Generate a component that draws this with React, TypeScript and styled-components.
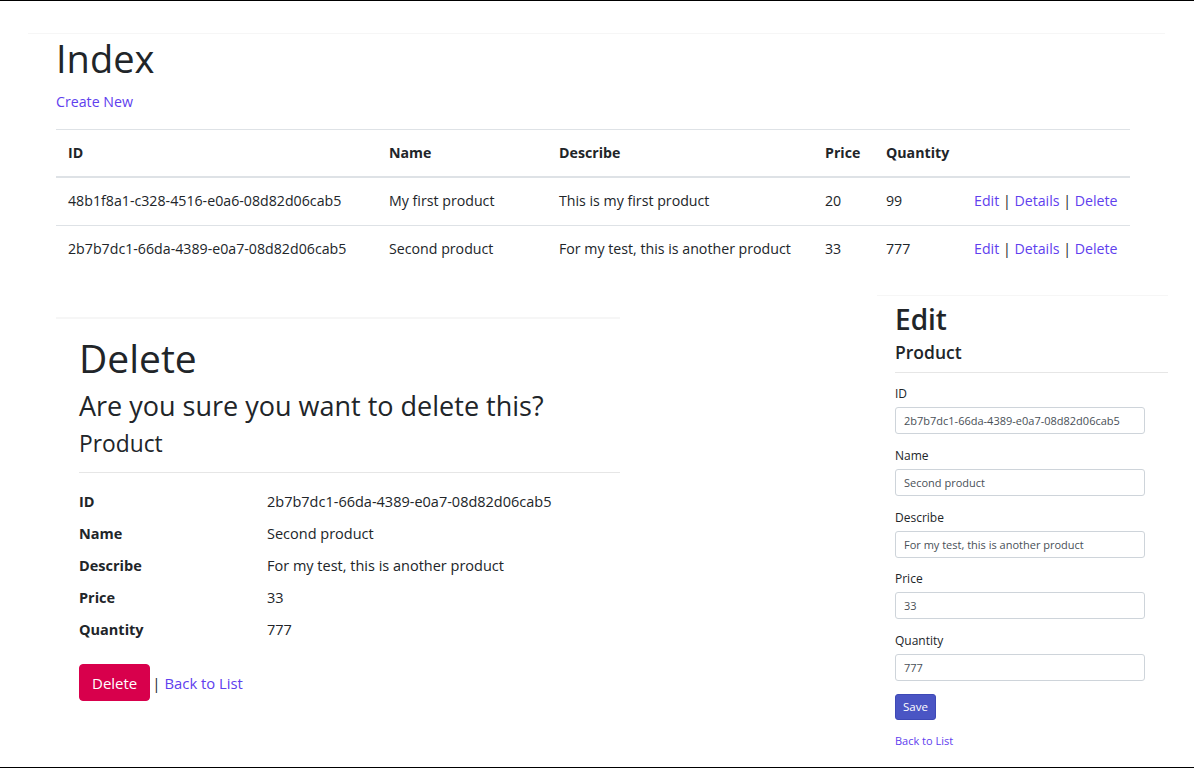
import React from "react";
import styled, { createGlobalStyle } from "styled-components";

const GlobalStyle = createGlobalStyle`
  html, body {
    margin: 0;
    padding: 0;
    background: #fff;
  }
  body {
    font-family: "Open Sans", "Noto Sans", sans-serif;
    color: #212529;
  }
`;

const colors = {
  text: "#212529",
  link: "#6040ee",
  border: "#dee2e6",
  danger: "#d8004c",
  primary: "#4a55c4",
};

type Product = {
  id: string;
  name: string;
  describe: string;
  price: number;
  quantity: number;
};

const products: Product[] = [
  {
    id: "48b1f8a1-c328-4516-e0a6-08d82d06cab5",
    name: "My first product",
    describe: "This is my first product",
    price: 20,
    quantity: 99,
  },
  {
    id: "2b7b7dc1-66da-4389-e0a7-08d82d06cab5",
    name: "Second product",
    describe: "For my test, this is another product",
    price: 33,
    quantity: 777,
  },
];

const columns = [
  { key: "id", label: "ID", width: 321 },
  { key: "name", label: "Name", width: 170 },
  { key: "describe", label: "Describe", width: 266 },
  { key: "price", label: "Price", width: 61 },
  { key: "quantity", label: "Quantity", width: 88 },
  { key: "actions", label: "", width: 168 },
];

const Frame = styled.div`
  width: 1194px;
  height: 768px;
  box-sizing: border-box;
  border-top: 1px solid #000;
  border-bottom: 1px solid #000;
  overflow: hidden;
`;

const IndexSection = styled.section`
  margin: 32px 0 0 28px;
  width: 1137px;
  box-sizing: border-box;
  padding-left: 28px;
  border-top: 1px solid #f6f6f6;
`;

const PageTitle = styled.h1<{ $size: number; $lh: number; $weight?: number }>`
  margin: 0;
  font-size: ${(p) => p.$size}px;
  line-height: ${(p) => p.$lh}px;
  font-weight: ${(p) => p.$weight ?? 500};
  color: ${colors.text};
`;

const Link = styled.a<{ $size?: number }>`
  color: ${colors.link};
  text-decoration: none;
  font-size: ${(p) => p.$size ?? 14.2}px;
  cursor: pointer;
`;

const CreateLink = styled.div`
  margin-top: 7px;
  line-height: 24px;
`;

const Table = styled.table`
  margin-top: 15px;
  width: 1074px;
  border-collapse: collapse;
  table-layout: fixed;
  font-size: 14.2px;
`;

const Th = styled.th`
  text-align: left;
  font-weight: 700;
  padding: 11px 12px;
  line-height: 24px;
  border-top: 1px solid ${colors.border};
  border-bottom: 2px solid ${colors.border};
`;

const Td = styled.td`
  padding: 11px 12px 12px;
  line-height: 24px;
  border-top: 1px solid ${colors.border};
  white-space: nowrap;
`;

const Sep = styled.span`
  color: ${colors.text};
`;

const BottomRow = styled.div`
  display: flex;
  align-items: flex-start;
  margin-top: 22px;
  padding-left: 56px;
  padding-right: 26px;
`;

const DeletePanel = styled.section`
  margin-top: 22px;
  width: 564px;
  box-sizing: border-box;
  padding: 15px 0 0 23px;
  border-top: 2px solid #f6f6f6;
`;

const Heading = styled.div<{ $size: number; $lh: number; $top: number; $weight?: number }>`
  margin-top: ${(p) => p.$top}px;
  font-size: ${(p) => p.$size}px;
  line-height: ${(p) => p.$lh}px;
  font-weight: ${(p) => p.$weight ?? 400};
`;

const Rule = styled.hr<{ $top: number; $bottom?: number }>`
  margin: ${(p) => p.$top}px 0 ${(p) => p.$bottom ?? 0}px;
  border: 0;
  border-top: 1px solid #e6e6e6;
`;

const DetailList = styled.dl`
  display: grid;
  grid-template-columns: 188px 1fr;
  row-gap: 8px;
  margin: 17px 0 22px;
  font-size: 14.5px;
  line-height: 24px;
`;

const Term = styled.dt`
  font-weight: 700;
`;

const Desc = styled.dd`
  margin: 0;
`;

const Actions = styled.div`
  display: flex;
  align-items: center;
  font-size: 15px;
  gap: 4px;

  & > button {
    margin-right: -2px;
  }
`;

const Button = styled.button<{ $variant: "danger" | "primary"; $small?: boolean }>`
  font-family: inherit;
  color: #fff;
  background: ${(p) => (p.$variant === "danger" ? colors.danger : colors.primary)};
  border: 1px solid ${(p) => (p.$variant === "danger" ? colors.danger : "#3e49b6")};
  border-radius: ${(p) => (p.$small ? 3 : 4)}px;
  height: ${(p) => (p.$small ? 26 : 37)}px;
  padding: 0 ${(p) => (p.$small ? 7 : 12)}px;
  font-size: ${(p) => (p.$small ? 11.5 : 15)}px;
  cursor: pointer;
`;

const EditPanel = styled.section`
  margin-left: auto;
  width: 291px;
  box-sizing: border-box;
  padding: 6px 0 0 18px;
  border-top: 1px solid #f6f6f6;
`;

const FormGroup = styled.div`
  display: flex;
  flex-direction: column;
  margin-bottom: 12.75px;
`;

const Label = styled.label`
  font-size: 12px;
  line-height: 18px;
  margin-bottom: 4px;
`;

const Input = styled.input`
  width: 250px;
  height: 27px;
  box-sizing: border-box;
  padding: 0 8px;
  border: 1px solid #ced4da;
  border-radius: 3px;
  font-family: inherit;
  font-size: 11px;
  color: #495057;
  outline: none;
`;

const BackLink = styled.div`
  margin-top: 11px;
  line-height: 16px;
`;

function renderCell(p: Product, key: string) {
  if (key === "actions") {
    return (
      <>
        <Link>Edit</Link> <Sep>|</Sep> <Link>Details</Link> <Sep>|</Sep> <Link>Delete</Link>
      </>
    );
  }
  return String(p[key as keyof Product]);
}

const selected = products[1];
const fields: { key: keyof Product; label: string }[] = [
  { key: "id", label: "ID" },
  { key: "name", label: "Name" },
  { key: "describe", label: "Describe" },
  { key: "price", label: "Price" },
  { key: "quantity", label: "Quantity" },
];

export default function App() {
  return (
    <>
      <GlobalStyle />
      <Frame>
        <IndexSection>
          <PageTitle $size={38} $lh={48}>
            Index
          </PageTitle>
          <CreateLink>
            <Link>Create New</Link>
          </CreateLink>
          <Table>
            <colgroup>
              {columns.map((c) => (
                <col key={c.key} style={{ width: c.width }} />
              ))}
            </colgroup>
            <thead>
              <tr>
                {columns.map((c) => (
                  <Th key={c.key}>{c.label}</Th>
                ))}
              </tr>
            </thead>
            <tbody>
              {products.map((p) => (
                <tr key={p.id}>
                  {columns.map((c) => (
                    <Td key={c.key}>{renderCell(p, c.key)}</Td>
                  ))}
                </tr>
              ))}
            </tbody>
          </Table>
        </IndexSection>

        <BottomRow>
          <DeletePanel>
            <PageTitle $size={39} $lh={48}>
              Delete
            </PageTitle>
            <Heading $size={27} $lh={32} $top={8}>
              Are you sure you want to delete this?
            </Heading>
            <Heading $size={22.8} $lh={27} $top={8}>
              Product
            </Heading>
            <Rule $top={15} />
            <DetailList>
              {fields.map((f) => (
                <React.Fragment key={f.key}>
                  <Term>{f.label}</Term>
                  <Desc>{String(selected[f.key])}</Desc>
                </React.Fragment>
              ))}
            </DetailList>
            <Actions>
              <Button $variant="danger">Delete</Button>
              <Sep>|</Sep>
              <Link $size={14.8}>Back to List</Link>
            </Actions>
          </DeletePanel>

          <EditPanel>
            <PageTitle $size={28} $lh={34} $weight={600}>
              Edit
            </PageTitle>
            <Heading $size={17.5} $lh={21} $top={6} $weight={600}>
              Product
            </Heading>
            <Rule $top={9} $bottom={12} />
            {fields.map((f) => (
              <FormGroup key={f.key}>
                <Label>{f.label}</Label>
                <Input defaultValue={String(selected[f.key])} />
              </FormGroup>
            ))}
            <Button $variant="primary" $small>
              Save
            </Button>
            <BackLink>
              <Link $size={11}>Back to List</Link>
            </BackLink>
          </EditPanel>
        </BottomRow>
      </Frame>
    </>
  );
}
